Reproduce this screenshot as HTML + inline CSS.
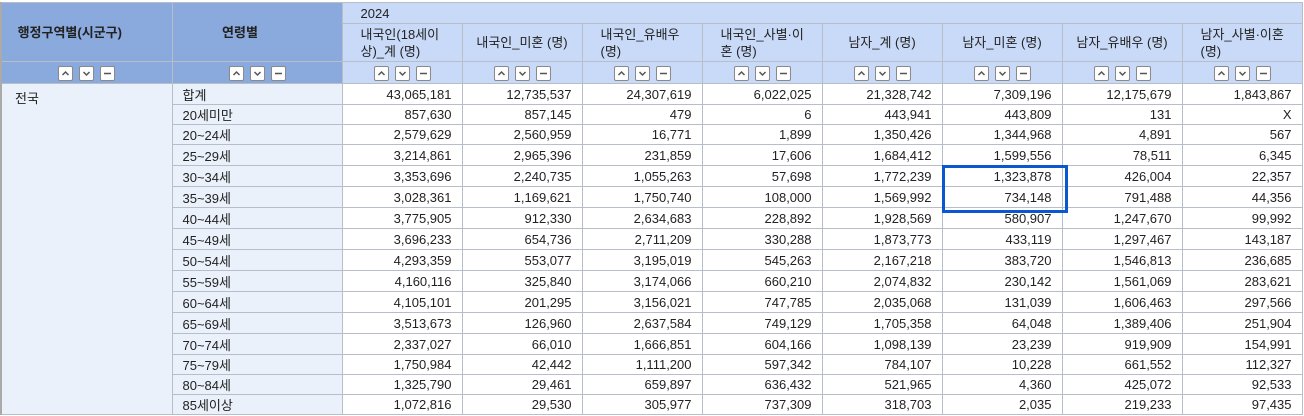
<!DOCTYPE html>
<html><head><meta charset="utf-8"><style>
body{margin:0;width:1304px;height:416px;overflow:hidden;background:#fff;font-family:"Liberation Sans","Noto Sans CJK KR",sans-serif;font-size:13px;color:#222}
table{position:absolute;left:0;top:2px;border-collapse:collapse;table-layout:fixed;border-left:2px solid #aaa}
td,th{border:1px solid #b8bec8;padding:0 6px;white-space:nowrap;overflow:hidden}
th{font-weight:normal;text-align:left;background:#c9daf8;vertical-align:middle;line-height:17px}
th.l{background:#8aa9dd;font-weight:bold;text-align:center;padding-right:40px}
th.w{white-space:normal}
tr.b th{height:21px;text-align:center;padding:0}
td{text-align:right;height:19px;padding:0 10px 0 6px}
tr.t td{height:20px}
td.a{background:#eaf1fa;text-align:left;vertical-align:top;padding-top:4px;padding-left:13px}
td.g{background:#eaf1fa;text-align:left;padding-left:10px}
.bt{display:inline-block;width:13px;height:13px;border:1px solid #8a8a8a;border-radius:2px;background:#fff;margin:0 3px;vertical-align:middle;position:relative}
.bt svg{position:absolute;left:0;top:0}
.box{position:absolute;left:942px;top:165px;width:120px;height:42px;border:3px solid #0b57d0;box-sizing:content-box}
</style></head><body>
<table>
<colgroup><col style="width:171px"><col style="width:170px"><col style="width:120px"><col style="width:120px"><col style="width:120px"><col style="width:120px"><col style="width:120px"><col style="width:120px"><col style="width:120px"><col style="width:120px"></colgroup>
<tr style="height:21px"><th class="l" rowspan="2">행정구역별(시군구)</th><th class="l" rowspan="2">연령별</th><th colspan="8" style="padding-left:18px">2024</th></tr>
<tr style="height:38px"><th class="w" style="padding-left:18px">내국인(18세이상)_계 (명)</th><th style="text-align:center">내국인_미혼 (명)</th><th class="w" style="padding-left:18px">내국인_유배우 (명)</th><th class="w" style="padding-left:18px">내국인_사별·이혼 (명)</th><th style="text-align:center">남자_계 (명)</th><th style="text-align:center">남자_미혼 (명)</th><th style="text-align:center">남자_유배우 (명)</th><th class="w" style="padding-left:18px">남자_사별·이혼 (명)</th></tr>
<tr class="b">
<th class="l" style="padding:0"><span class="bt"><svg width="13" height="13"><path d="M3.5 8 L6.5 5 L9.5 8" fill="none" stroke="#555" stroke-width="1.5"/></svg></span><span class="bt"><svg width="13" height="13"><path d="M3.5 5 L6.5 8 L9.5 5" fill="none" stroke="#555" stroke-width="1.5"/></svg></span><span class="bt"><svg width="13" height="13"><path d="M3 6.5 H10" stroke="#555" stroke-width="1.5"/></svg></span></th>
<th class="l" style="padding:0"><span class="bt"><svg width="13" height="13"><path d="M3.5 8 L6.5 5 L9.5 8" fill="none" stroke="#555" stroke-width="1.5"/></svg></span><span class="bt"><svg width="13" height="13"><path d="M3.5 5 L6.5 8 L9.5 5" fill="none" stroke="#555" stroke-width="1.5"/></svg></span><span class="bt"><svg width="13" height="13"><path d="M3 6.5 H10" stroke="#555" stroke-width="1.5"/></svg></span></th>
<th><span class="bt"><svg width="13" height="13"><path d="M3.5 8 L6.5 5 L9.5 8" fill="none" stroke="#555" stroke-width="1.5"/></svg></span><span class="bt"><svg width="13" height="13"><path d="M3.5 5 L6.5 8 L9.5 5" fill="none" stroke="#555" stroke-width="1.5"/></svg></span><span class="bt"><svg width="13" height="13"><path d="M3 6.5 H10" stroke="#555" stroke-width="1.5"/></svg></span></th>
<th><span class="bt"><svg width="13" height="13"><path d="M3.5 8 L6.5 5 L9.5 8" fill="none" stroke="#555" stroke-width="1.5"/></svg></span><span class="bt"><svg width="13" height="13"><path d="M3.5 5 L6.5 8 L9.5 5" fill="none" stroke="#555" stroke-width="1.5"/></svg></span><span class="bt"><svg width="13" height="13"><path d="M3 6.5 H10" stroke="#555" stroke-width="1.5"/></svg></span></th>
<th><span class="bt"><svg width="13" height="13"><path d="M3.5 8 L6.5 5 L9.5 8" fill="none" stroke="#555" stroke-width="1.5"/></svg></span><span class="bt"><svg width="13" height="13"><path d="M3.5 5 L6.5 8 L9.5 5" fill="none" stroke="#555" stroke-width="1.5"/></svg></span><span class="bt"><svg width="13" height="13"><path d="M3 6.5 H10" stroke="#555" stroke-width="1.5"/></svg></span></th>
<th><span class="bt"><svg width="13" height="13"><path d="M3.5 8 L6.5 5 L9.5 8" fill="none" stroke="#555" stroke-width="1.5"/></svg></span><span class="bt"><svg width="13" height="13"><path d="M3.5 5 L6.5 8 L9.5 5" fill="none" stroke="#555" stroke-width="1.5"/></svg></span><span class="bt"><svg width="13" height="13"><path d="M3 6.5 H10" stroke="#555" stroke-width="1.5"/></svg></span></th>
<th><span class="bt"><svg width="13" height="13"><path d="M3.5 8 L6.5 5 L9.5 8" fill="none" stroke="#555" stroke-width="1.5"/></svg></span><span class="bt"><svg width="13" height="13"><path d="M3.5 5 L6.5 8 L9.5 5" fill="none" stroke="#555" stroke-width="1.5"/></svg></span><span class="bt"><svg width="13" height="13"><path d="M3 6.5 H10" stroke="#555" stroke-width="1.5"/></svg></span></th>
<th><span class="bt"><svg width="13" height="13"><path d="M3.5 8 L6.5 5 L9.5 8" fill="none" stroke="#555" stroke-width="1.5"/></svg></span><span class="bt"><svg width="13" height="13"><path d="M3.5 5 L6.5 8 L9.5 5" fill="none" stroke="#555" stroke-width="1.5"/></svg></span><span class="bt"><svg width="13" height="13"><path d="M3 6.5 H10" stroke="#555" stroke-width="1.5"/></svg></span></th>
<th><span class="bt"><svg width="13" height="13"><path d="M3.5 8 L6.5 5 L9.5 8" fill="none" stroke="#555" stroke-width="1.5"/></svg></span><span class="bt"><svg width="13" height="13"><path d="M3.5 5 L6.5 8 L9.5 5" fill="none" stroke="#555" stroke-width="1.5"/></svg></span><span class="bt"><svg width="13" height="13"><path d="M3 6.5 H10" stroke="#555" stroke-width="1.5"/></svg></span></th>
<th><span class="bt"><svg width="13" height="13"><path d="M3.5 8 L6.5 5 L9.5 8" fill="none" stroke="#555" stroke-width="1.5"/></svg></span><span class="bt"><svg width="13" height="13"><path d="M3.5 5 L6.5 8 L9.5 5" fill="none" stroke="#555" stroke-width="1.5"/></svg></span><span class="bt"><svg width="13" height="13"><path d="M3 6.5 H10" stroke="#555" stroke-width="1.5"/></svg></span></th>
</tr>
<tr class="t"><td class="a" rowspan="16">전국</td><td class="g">합계</td><td>43,065,181</td><td>12,735,537</td><td>24,307,619</td><td>6,022,025</td><td>21,328,742</td><td>7,309,196</td><td>12,175,679</td><td>1,843,867</td></tr>
<tr><td class="g">20세미만</td><td>857,630</td><td>857,145</td><td>479</td><td>6</td><td>443,941</td><td>443,809</td><td>131</td><td>X</td></tr>
<tr><td class="g">20~24세</td><td>2,579,629</td><td>2,560,959</td><td>16,771</td><td>1,899</td><td>1,350,426</td><td>1,344,968</td><td>4,891</td><td>567</td></tr>
<tr class="t"><td class="g">25~29세</td><td>3,214,861</td><td>2,965,396</td><td>231,859</td><td>17,606</td><td>1,684,412</td><td>1,599,556</td><td>78,511</td><td>6,345</td></tr>
<tr class="t"><td class="g">30~34세</td><td>3,353,696</td><td>2,240,735</td><td>1,055,263</td><td>57,698</td><td>1,772,239</td><td>1,323,878</td><td>426,004</td><td>22,357</td></tr>
<tr class="t"><td class="g">35~39세</td><td>3,028,361</td><td>1,169,621</td><td>1,750,740</td><td>108,000</td><td>1,569,992</td><td>734,148</td><td>791,488</td><td>44,356</td></tr>
<tr class="t"><td class="g">40~44세</td><td>3,775,905</td><td>912,330</td><td>2,634,683</td><td>228,892</td><td>1,928,569</td><td>580,907</td><td>1,247,670</td><td>99,992</td></tr>
<tr class="t"><td class="g">45~49세</td><td>3,696,233</td><td>654,736</td><td>2,711,209</td><td>330,288</td><td>1,873,773</td><td>433,119</td><td>1,297,467</td><td>143,187</td></tr>
<tr class="t"><td class="g">50~54세</td><td>4,293,359</td><td>553,077</td><td>3,195,019</td><td>545,263</td><td>2,167,218</td><td>383,720</td><td>1,546,813</td><td>236,685</td></tr>
<tr class="t"><td class="g">55~59세</td><td>4,160,116</td><td>325,840</td><td>3,174,066</td><td>660,210</td><td>2,074,832</td><td>230,142</td><td>1,561,069</td><td>283,621</td></tr>
<tr class="t"><td class="g">60~64세</td><td>4,105,101</td><td>201,295</td><td>3,156,021</td><td>747,785</td><td>2,035,068</td><td>131,039</td><td>1,606,463</td><td>297,566</td></tr>
<tr class="t"><td class="g">65~69세</td><td>3,513,673</td><td>126,960</td><td>2,637,584</td><td>749,129</td><td>1,705,358</td><td>64,048</td><td>1,389,406</td><td>251,904</td></tr>
<tr class="t"><td class="g">70~74세</td><td>2,337,027</td><td>66,010</td><td>1,666,851</td><td>604,166</td><td>1,098,139</td><td>23,239</td><td>919,909</td><td>154,991</td></tr>
<tr><td class="g">75~79세</td><td>1,750,984</td><td>42,442</td><td>1,111,200</td><td>597,342</td><td>784,107</td><td>10,228</td><td>661,552</td><td>112,327</td></tr>
<tr><td class="g">80~84세</td><td>1,325,790</td><td>29,461</td><td>659,897</td><td>636,432</td><td>521,965</td><td>4,360</td><td>425,072</td><td>92,533</td></tr>
<tr><td class="g">85세이상</td><td>1,072,816</td><td>29,530</td><td>305,977</td><td>737,309</td><td>318,703</td><td>2,035</td><td>219,233</td><td>97,435</td></tr>
</table>
<div class="box"></div>
</body></html>
